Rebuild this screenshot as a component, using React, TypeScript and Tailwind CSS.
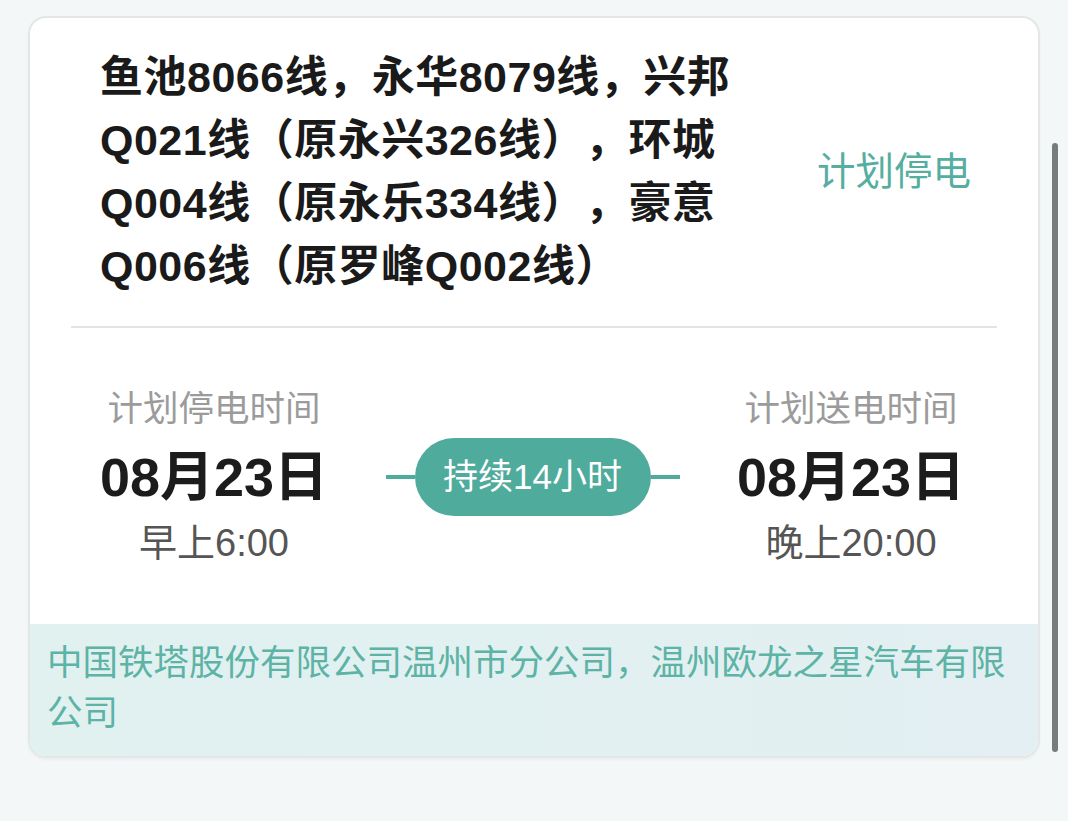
import { FC } from 'react';

const font = '"Liberation Sans", "Noto Sans CJK SC", sans-serif';

interface TimeColumnProps {
    label: string;
    date: string;
    time: string;
    widthClass: string;
}

const TimeColumn: FC<TimeColumnProps> = ({ label, date, time, widthClass }) => (
    <div className={`flex flex-col items-center ${widthClass}`}>
        <span className="text-[35.5px] leading-[48px] text-[#9b9b9b]">{label}</span>
        <span className="mt-[14px] text-[54px] leading-[60px] font-bold text-[#1c1c1c]">
            {date}
        </span>
        <span className="mt-[13px] text-[38px] leading-[46px] text-[#555555]">
            {time}
        </span>
    </div>
);

const titleLines = [
    '鱼池8066线，永华8079线，兴邦',
    'Q021线（原永兴326线），环城',
    'Q004线（原永乐334线），豪意',
    'Q006线（原罗峰Q002线）'
];

export default function App() {
    return (
        <div
            className="relative w-[1068px] h-[821px] bg-[#f4f7f8] pt-[16px] pl-[28px] overflow-hidden [text-spacing-trim:space-all]"
            style={{ fontFamily: font }}
        >
            <div className="w-[1012px] rounded-[18px] border-2 border-[#e4e7e7] bg-white overflow-hidden shadow-[0_2px_3px_rgba(0,0,0,0.04)]">
                <div className="px-[41px]">
                    <div className="flex items-center pt-[28px] pb-[28px] border-b-2 border-[#e3e3e3]">
                        <h1 className="pl-[29px] text-[43px] leading-[63px] tracking-[0.5px] font-bold text-[#1a1a1a]">
                            {titleLines.map((line) => (
                                <div key={line} className="whitespace-nowrap">
                                    {line}
                                </div>
                            ))}
                        </h1>
                        <span className="ml-auto mr-[26px] text-[38.5px] leading-[48px] text-[#55ae9f]">
                            计划停电
                        </span>
                    </div>
                    <div className="flex items-start pt-[57px] pb-[58px]">
                        <TimeColumn
                            label="计划停电时间"
                            date="08月23日"
                            time="早上6:00"
                            widthClass="w-[286px]"
                        />
                        <div className="flex-1 flex items-center justify-center pt-[53px] pl-[3px]">
                            <div className="w-[29px] h-[4px] bg-[#4fab9b]" />
                            <div className="h-[78px] w-[236px] rounded-full bg-[#4fab9b] flex items-center justify-center text-white text-[35px]">
                                持续14小时
                            </div>
                            <div className="w-[29px] h-[4px] bg-[#4fab9b]" />
                        </div>
                        <TimeColumn
                            label="计划送电时间"
                            date="08月23日"
                            time="晚上20:00"
                            widthClass="w-[292px]"
                        />
                    </div>
                </div>
                <div className="bg-gradient-to-r from-[#e0f1f0] to-[#e3eff2] pl-[17px] pt-[14px] pb-[18px] text-[35.5px] leading-[50px] text-[#5db3a5]">
                    <div className="whitespace-nowrap">
                        中国铁塔股份有限公司温州市分公司，温州欧龙之星汽车有限
                    </div>
                    <div>公司</div>
                </div>
            </div>
            <div className="absolute left-[1052px] top-[143px] w-[6px] h-[609px] rounded-full bg-[#767b7b]" />
        </div>
    );
}
